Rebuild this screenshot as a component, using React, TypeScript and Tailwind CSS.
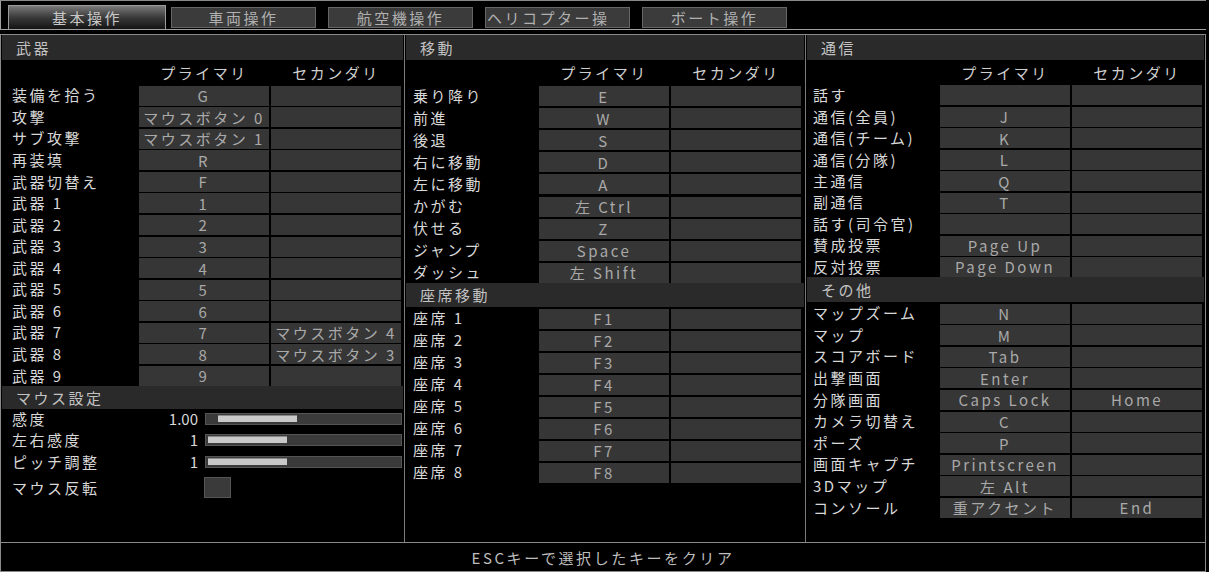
import React from "react";

type Bind = [string, string, string];

const weapons: Bind[] = [
  ["装備を拾う", "G", ""],
  ["攻撃", "マウスボタン 0", ""],
  ["サブ攻撃", "マウスボタン 1", ""],
  ["再装填", "R", ""],
  ["武器切替え", "F", ""],
  ["武器 1", "1", ""],
  ["武器 2", "2", ""],
  ["武器 3", "3", ""],
  ["武器 4", "4", ""],
  ["武器 5", "5", ""],
  ["武器 6", "6", ""],
  ["武器 7", "7", "マウスボタン 4"],
  ["武器 8", "8", "マウスボタン 3"],
  ["武器 9", "9", ""],
];

const movement: Bind[] = [
  ["乗り降り", "E", ""],
  ["前進", "W", ""],
  ["後退", "S", ""],
  ["右に移動", "D", ""],
  ["左に移動", "A", ""],
  ["かがむ", "左 Ctrl", ""],
  ["伏せる", "Z", ""],
  ["ジャンプ", "Space", ""],
  ["ダッシュ", "左 Shift", ""],
];

const seats: Bind[] = [1, 2, 3, 4, 5, 6, 7, 8].map((n) => [`座席 ${n}`, `F${n}`, ""] as Bind);

const comms: Bind[] = [
  ["話す", "", ""],
  ["通信(全員)", "J", ""],
  ["通信(チーム)", "K", ""],
  ["通信(分隊)", "L", ""],
  ["主通信", "Q", ""],
  ["副通信", "T", ""],
  ["話す(司令官)", "", ""],
  ["賛成投票", "Page Up", ""],
  ["反対投票", "Page Down", ""],
];

const misc: Bind[] = [
  ["マップズーム", "N", ""],
  ["マップ", "M", ""],
  ["スコアボード", "Tab", ""],
  ["出撃画面", "Enter", ""],
  ["分隊画面", "Caps Lock", "Home"],
  ["カメラ切替え", "C", ""],
  ["ポーズ", "P", ""],
  ["画面キャプチ", "Printscreen", ""],
  ["3Dマップ", "左 Alt", ""],
  ["コンソール", "重アクセント", "End"],
];

const tabs = ["車両操作", "航空機操作", "ヘリコプター操", "ボート操作"];

function SectionHeader({ title, h }: { title: string; h: string }) {
  return (
    <div className={`${h} mx-[1px] bg-[#2a2a2a] flex items-center pl-[14px] text-[#c2c2c2]`}>
      {title}
    </div>
  );
}

function ColHeader({ labelW }: { labelW: string }) {
  return (
    <div className="h-[24px] flex items-center text-[#cfcfcf]">
      <div className={labelW} />
      <div className="w-[130px] text-center">プライマリ</div>
      <div className="w-[130px] ml-[2px] text-center">セカンダリ</div>
    </div>
  );
}

function KeyCell({ text }: { text: string }) {
  return (
    <div className="w-[130px] h-[20px] bg-[#363636] flex items-center justify-center overflow-hidden whitespace-nowrap text-[#a9a9a9]">
      {text}
    </div>
  );
}

function Rows({ data, rowH, labelW }: { data: Bind[]; rowH: string; labelW: string }) {
  return (
    <>
      {data.map(([label, p, s]) => (
        <div key={label} className={`${rowH} flex items-end`}>
          <div className={`${labelW} self-center whitespace-nowrap text-[#d8d8d8]`}>{label}</div>
          <KeyCell text={p} />
          <div className="w-[2px]" />
          <KeyCell text={s} />
        </div>
      ))}
    </>
  );
}

function Slider({ label, value, fill, h }: { label: string; value: string; fill: string; h: string }) {
  return (
    <div className={`${h} flex items-center`}>
      <div className="w-[150px] pl-[11px] text-[#d8d8d8] whitespace-nowrap">{label}</div>
      <div className="w-[47px] text-right tracking-[0px] text-[#d8d8d8]">{value}</div>
      <div className="ml-[7px] w-[197px] h-[12px] bg-[#3a3a3a] border border-[#555] flex items-center">
        <div className={`${fill} w-[79px] h-[7px] bg-[#c9c9c9] border-t border-[#888]`} />
      </div>
    </div>
  );
}

export default function App() {
  return (
    <div className="w-[1209px] h-[572px] bg-black overflow-hidden font-['Noto_Sans_CJK_JP','Noto_Sans',sans-serif] text-[15px] tracking-[2.5px] leading-none">
      <div className="w-[1206px] h-full flex flex-col border-t border-[#8a8a8a]">
        {/* tabs */}
        <div className="h-[29px] flex items-end pl-[7px] border-l border-b border-[#a0a0a0]">
          <div className="w-[158px] h-[24px] border border-b-0 border-[#9a9a9a] bg-gradient-to-b from-[#7a7a7a] via-[#3a3a3a] to-[#141414] flex items-center justify-center text-[#c8c8c8]">
            基本操作
          </div>
          <div className="flex items-end gap-[12px] ml-[5px] mb-[1px]">
            {tabs.map((t, i) => (
              <div
                key={t}
                className={`w-[145px] h-[21px] border border-[#666] bg-[#3b3b3b] flex items-center text-[#b0b0b0] whitespace-nowrap overflow-hidden ${
                  i === 2 ? "justify-start pl-[1px]" : "justify-center"
                }`}
              >
                {t}
              </div>
            ))}
          </div>
        </div>

        {/* columns */}
        <div className="mt-[4px] flex-1 grid grid-cols-[404px_401px_399px] border-t border-x border-[#8a8a8a]">
          <div className="border-r border-[#7a7a7a] flex flex-col">
            <SectionHeader title="武器" h="h-[25px]" />
            <ColHeader labelW="w-[138px]" />
            <div className="[&>div>div:first-child]:pl-[11px]">
              <Rows data={weapons} rowH="h-[21.57px]" labelW="w-[138px]" />
            </div>
            <SectionHeader title="マウス設定" h="h-[23px]" />
            <Slider label="感度" value="1.00" fill="ml-[12px]" h="h-[20px]" />
            <Slider label="左右感度" value="1" fill="ml-[2px]" h="h-[22px]" />
            <Slider label="ピッチ調整" value="1" fill="ml-[2px]" h="h-[22px]" />
            <div className="h-[29px] flex items-center">
              <div className="w-[203px] pl-[11px] text-[#d8d8d8]">マウス反転</div>
              <div className="w-[27px] h-[21px] bg-[#3a3a3a] border border-[#555]" />
            </div>
          </div>

          <div className="border-r border-[#7a7a7a] flex flex-col">
            <SectionHeader title="移動" h="h-[25px]" />
            <ColHeader labelW="w-[134px]" />
            <div className="[&>div>div:first-child]:pl-[8px]">
              <Rows data={movement} rowH="h-[22.1px]" labelW="w-[134px]" />
            </div>
            <SectionHeader title="座席移動" h="h-[24px]" />
            <div className="[&>div>div:first-child]:pl-[8px]">
              <Rows data={seats} rowH="h-[22px]" labelW="w-[134px]" />
            </div>
          </div>

          <div className="flex flex-col">
            <SectionHeader title="通信" h="h-[25px]" />
            <ColHeader labelW="w-[134px]" />
            <div className="[&>div>div:first-child]:pl-[7px]">
              <Rows data={comms} rowH="h-[21.45px]" labelW="w-[134px]" />
            </div>
            <SectionHeader title="その他" h="h-[25px]" />
            <div className="[&>div>div:first-child]:pl-[7px]">
              <Rows data={misc} rowH="h-[21.6px]" labelW="w-[134px]" />
            </div>
          </div>
        </div>

        {/* footer */}
        <div className="h-[30px] border border-[#8a8a8a] flex items-center justify-center tracking-[2.6px] text-[#bdbdbd]">
          ESCキーで選択したキーをクリア
        </div>
      </div>
    </div>
  );
}
